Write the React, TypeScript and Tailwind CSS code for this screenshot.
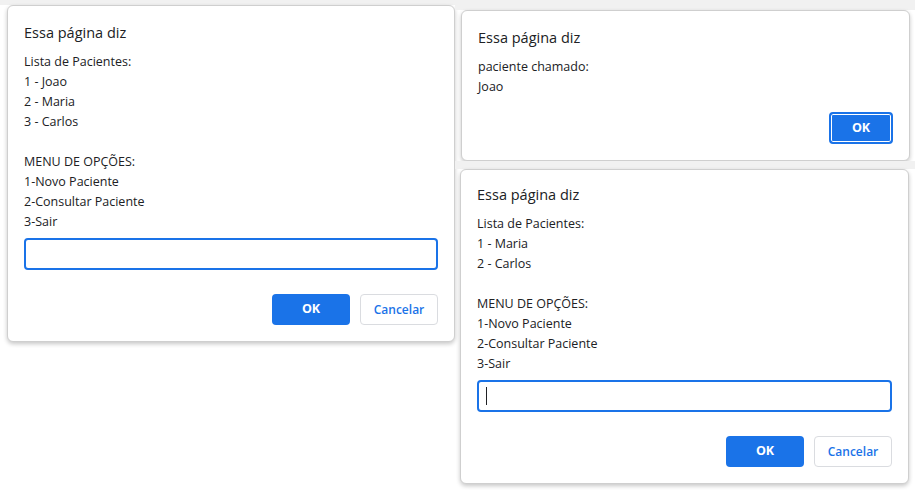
import React from 'react'

const font = { fontFamily: '"Open Sans", "Noto Sans", Arial, sans-serif' }

interface DialogProps {
  lines: string[]
  prompt?: boolean
  caret?: boolean
  focusOk?: boolean
  className?: string
}

function Dialog({ lines, prompt, caret, focusOk, className }: DialogProps) {
  return (
    <div
      className={`w-[449px] rounded-[6px] border border-[#cfcfcf] bg-white px-4 pb-[16px] pt-[17px] text-[#202124] shadow-[0_2px_4px_rgba(0,0,0,0.22)] ${className ?? ''}`}
    >
      <p className="text-[14.5px] leading-[20px]">Essa página diz</p>
      <div className="mt-[9px] text-[12.5px] leading-[20px]">
        {lines.map((line, i) => (
          <p key={i} className="h-[20px] whitespace-pre">
            {line}
          </p>
        ))}
      </div>
      {prompt ? (
        <div className="mt-[6px] flex h-[32px] items-center rounded-[4px] border-2 border-[#1a73e8] px-[7px]">
          {caret ? <span className="h-[18px] w-px bg-[#202124]" /> : null}
        </div>
      ) : null}
      <div className={`flex justify-end gap-[10px] ${prompt ? 'mt-[24px]' : 'mt-[15px]'}`}>
        {focusOk ? (
          <button
            type="button"
            className="h-[32px] w-[64px] rounded-[4px] border-2 border-[#1a73e8] bg-[#1a73e8] text-[12.5px] font-bold text-white shadow-[inset_0_0_0_1px_white]"
          >
            OK
          </button>
        ) : (
          <button type="button" className="h-[31px] w-[78px] rounded-[4px] bg-[#1a73e8] text-[12.5px] font-bold text-white">
            OK
          </button>
        )}
        {prompt ? (
          <button
            type="button"
            className="h-[31px] w-[78px] rounded-[4px] border border-[#dadce0] bg-white text-[12px] font-semibold text-[#1a73e8]"
          >
            Cancelar
          </button>
        ) : null}
      </div>
    </div>
  )
}

export default function App() {
  return (
    <div className="flex h-[493px] w-[915px] overflow-hidden bg-white" style={font}>
      <div className="w-[455px] shrink-0">
        <div className="h-[5px] bg-[#f1f1f1]" />
        <Dialog
          className="ml-[7px] !w-[448px]"
          prompt
          lines={[
            'Lista de Pacientes:',
            '1 - Joao',
            '2 - Maria',
            '3 - Carlos',
            '',
            'MENU DE OPÇÕES:',
            '1-Novo Paciente',
            '2-Consultar Paciente',
            '3-Sair',
          ]}
        />
      </div>
      <div className="flex-1">
        <div className="h-[10px] bg-[#f1f1f1]" />
        <Dialog className="ml-[6px]" focusOk lines={['paciente chamado:', 'Joao']} />
        <div className="h-[8px] bg-[#f1f1f1]" />
        <Dialog
          className="ml-[5px] !pt-[15px]"
          prompt
          caret
          lines={[
            'Lista de Pacientes:',
            '1 - Maria',
            '2 - Carlos',
            '',
            'MENU DE OPÇÕES:',
            '1-Novo Paciente',
            '2-Consultar Paciente',
            '3-Sair',
          ]}
        />
      </div>
    </div>
  )
}
